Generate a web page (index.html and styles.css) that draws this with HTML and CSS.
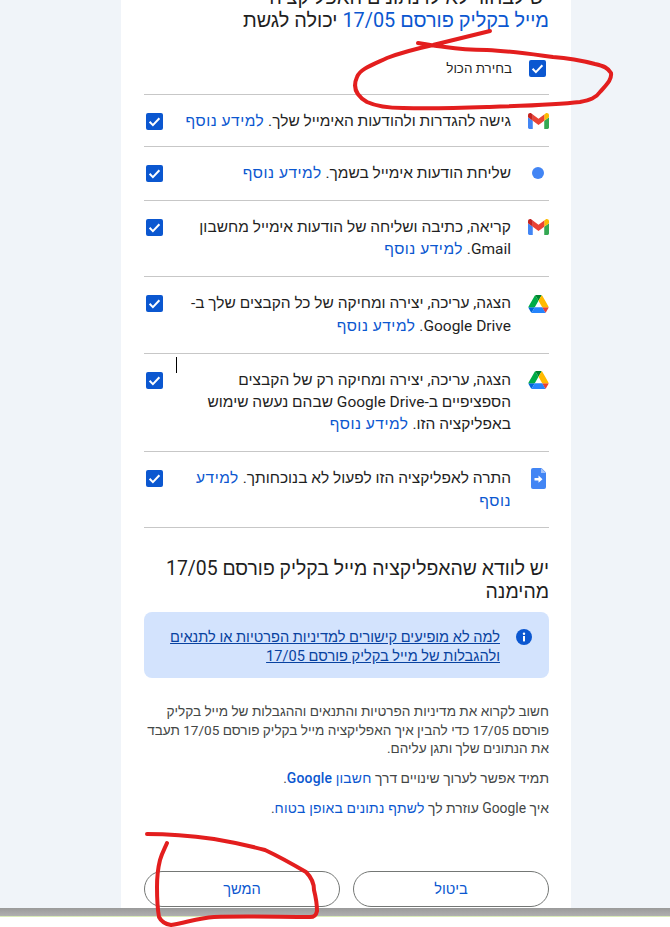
FILE: index.html
```html
<!DOCTYPE html>
<html lang="he" dir="rtl">
<head>
<meta charset="utf-8">
<title>בחירת הרשאות</title>
<link rel="stylesheet" href="styles.css">
</head>
<body>
<div class="screen">
  <main class="viewport">
    <div class="card">
      <h1 class="title">יש לבחור לאילו נתונים האפליקציה<br><a class="app-link">מייל בקליק פורסם 17/05</a> יכולה לגשת</h1>

      <label class="select-all">
        <span class="box"><svg viewBox="0 0 17 17"><path d="M3.6 8.8l3.3 3.3 6.5-6.9" class="tick"/></svg></span>
        <span class="select-label">בחירת הכול</span>
      </label>

      <ul class="scopes">
        <li class="scope">
          <span class="scope-icon"><svg class="ic-gmail" viewBox="52 42 88 66"><path fill="#4285f4" d="M58 108h14V74L52 59v43c0 3.32 2.69 6 6 6"/><path fill="#34a853" d="M120 108h14c3.32 0 6-2.69 6-6V59l-20 15"/><path fill="#fbbc04" d="M120 48v26l20-15v-8c0-7.42-8.47-11.65-14.4-7.2"/><path fill="#ea4335" d="M72 74V48l24 18 24-18v26L96 92"/><path fill="#c5221f" d="M52 51v8l20 15V48l-5.6-4.2c-5.94-4.45-14.4-.22-14.4 7.2"/></svg></span>
          <p class="scope-text">גישה להגדרות ולהודעות האימייל שלך. <a class="more">למידע נוסף</a></p>
          <span class="box"><svg viewBox="0 0 17 17"><path d="M3.6 8.8l3.3 3.3 6.5-6.9" class="tick"/></svg></span>
        </li>
        <li class="scope">
          <span class="scope-icon"><span class="dot"></span></span>
          <p class="scope-text">שליחת הודעות אימייל בשמך. <a class="more">למידע נוסף</a></p>
          <span class="box"><svg viewBox="0 0 17 17"><path d="M3.6 8.8l3.3 3.3 6.5-6.9" class="tick"/></svg></span>
        </li>
        <li class="scope">
          <span class="scope-icon"><svg class="ic-gmail" viewBox="52 42 88 66"><path fill="#4285f4" d="M58 108h14V74L52 59v43c0 3.32 2.69 6 6 6"/><path fill="#34a853" d="M120 108h14c3.32 0 6-2.69 6-6V59l-20 15"/><path fill="#fbbc04" d="M120 48v26l20-15v-8c0-7.42-8.47-11.65-14.4-7.2"/><path fill="#ea4335" d="M72 74V48l24 18 24-18v26L96 92"/><path fill="#c5221f" d="M52 51v8l20 15V48l-5.6-4.2c-5.94-4.45-14.4-.22-14.4 7.2"/></svg></span>
          <p class="scope-text">קריאה, כתיבה ושליחה של הודעות אימייל מחשבון Gmail. <a class="more">למידע נוסף</a></p>
          <span class="box"><svg viewBox="0 0 17 17"><path d="M3.6 8.8l3.3 3.3 6.5-6.9" class="tick"/></svg></span>
        </li>
        <li class="scope">
          <span class="scope-icon"><svg class="ic-drive" viewBox="0 0 87.3 78"><path d="m6.6 66.85 3.85 6.65c.8 1.4 1.95 2.5 3.3 3.3l13.75-23.8h-27.5c0 1.55.4 3.1 1.2 4.5z" fill="#0066da"/><path d="m43.65 25-13.75-23.8c-1.35.8-2.5 1.9-3.3 3.3l-25.4 44a9.06 9.06 0 0 0 -1.2 4.5h27.5z" fill="#00ac47"/><path d="m73.55 76.8c1.35-.8 2.5-1.9 3.3-3.3l1.6-2.75 7.65-13.25c.8-1.4 1.2-2.95 1.2-4.5h-27.502l5.852 11.5z" fill="#ea4335"/><path d="m43.65 25 13.75-23.8c-1.35-.8-2.9-1.2-4.5-1.2h-18.5c-1.6 0-3.15.45-4.5 1.2z" fill="#00832d"/><path d="m59.8 53h-32.3l-13.75 23.8c1.35.8 2.9 1.2 4.5 1.2h50.8c1.6 0 3.15-.45 4.5-1.2z" fill="#2684fc"/><path d="m73.4 26.5-12.7-22c-.8-1.4-1.95-2.5-3.3-3.3l-13.75 23.8 16.15 28h27.45c0-1.55-.4-3.1-1.2-4.5z" fill="#ffba00"/></svg></span>
          <p class="scope-text">הצגה, עריכה, יצירה ומחיקה של כל הקבצים שלך ב-Google Drive. <a class="more">למידע נוסף</a></p>
          <span class="box"><svg viewBox="0 0 17 17"><path d="M3.6 8.8l3.3 3.3 6.5-6.9" class="tick"/></svg></span>
        </li>
        <li class="scope">
          <span class="scope-icon"><svg class="ic-drive" viewBox="0 0 87.3 78"><path d="m6.6 66.85 3.85 6.65c.8 1.4 1.95 2.5 3.3 3.3l13.75-23.8h-27.5c0 1.55.4 3.1 1.2 4.5z" fill="#0066da"/><path d="m43.65 25-13.75-23.8c-1.35.8-2.5 1.9-3.3 3.3l-25.4 44a9.06 9.06 0 0 0 -1.2 4.5h27.5z" fill="#00ac47"/><path d="m73.55 76.8c1.35-.8 2.5-1.9 3.3-3.3l1.6-2.75 7.65-13.25c.8-1.4 1.2-2.95 1.2-4.5h-27.502l5.852 11.5z" fill="#ea4335"/><path d="m43.65 25 13.75-23.8c-1.35-.8-2.9-1.2-4.5-1.2h-18.5c-1.6 0-3.15.45-4.5 1.2z" fill="#00832d"/><path d="m59.8 53h-32.3l-13.75 23.8c1.35.8 2.9 1.2 4.5 1.2h50.8c1.6 0 3.15-.45 4.5-1.2z" fill="#2684fc"/><path d="m73.4 26.5-12.7-22c-.8-1.4-1.95-2.5-3.3-3.3l-13.75 23.8 16.15 28h27.45c0-1.55-.4-3.1-1.2-4.5z" fill="#ffba00"/></svg></span>
          <p class="scope-text">הצגה, עריכה, יצירה ומחיקה רק של הקבצים הספציפיים ב-Google Drive שבהם נעשה שימוש באפליקציה הזו. <a class="more">למידע נוסף</a></p>
          <span class="box"><svg viewBox="0 0 17 17"><path d="M3.6 8.8l3.3 3.3 6.5-6.9" class="tick"/></svg></span>
        </li>
        <li class="scope">
          <span class="scope-icon"><svg class="ic-doc" viewBox="0 0 15 21"><path fill="#4285f4" d="M2 0h8.5L15 4.5V19a2 2 0 0 1-2 2H2a2 2 0 0 1-2-2V2a2 2 0 0 1 2-2z"/><path fill="#a1c2fa" d="M10 0l5 5h-5z"/><path fill="#fff" d="M3.5 10h4V7.6l4 3.6-4 3.6v-2.4h-4z"/></svg></span>
          <p class="scope-text">התרה לאפליקציה הזו לפעול לא בנוכחותך. <a class="more">למידע נוסף</a></p>
          <span class="box"><svg viewBox="0 0 17 17"><path d="M3.6 8.8l3.3 3.3 6.5-6.9" class="tick"/></svg></span>
        </li>
      </ul>

      <h2 class="subtitle">יש לוודא שהאפליקציה מייל בקליק פורסם 17/05 מהימנה</h2>

      <div class="notice">
        <svg class="info" viewBox="0 0 16 16"><circle cx="8" cy="8" r="8" fill="#0b57d0"/><rect x="7" y="7" width="2" height="5.4" fill="#fff"/><circle cx="8" cy="4.8" r="1.2" fill="#fff"/></svg>
        <a class="notice-link">למה לא מופיעים קישורים למדיניות הפרטיות או לתנאים ולהגבלות של מייל בקליק פורסם 17/05</a>
      </div>

      <p class="note note-lead">חשוב לקרוא את מדיניות הפרטיות והתנאים וההגבלות של מייל בקליק פורסם 17/05 כדי להבין איך האפליקציה מייל בקליק פורסם 17/05 תעבד את הנתונים שלך ותגן עליהם.</p>
      <p class="note">תמיד אפשר לערוך שינויים דרך <a class="strong-link">חשבון Google</a>.</p>
      <p class="note">איך Google עוזרת לך <a class="strong-link">לשתף נתונים באופן בטוח</a>.</p>

      <div class="actions">
        <button class="btn" type="button">ביטול</button>
        <button class="btn" type="button">המשך</button>
      </div>
    </div>
  </main>
  <div class="taskbar"></div>
  <div class="below"></div>

  <span class="text-caret"></span>
  <svg class="scribble" viewBox="0 0 670 927">
    <path d="M490 31C470 36 450 41 433 45C415 49 400 53 387 58C372 65 360 69 357 77C353 86 355 95 367 102C378 107 392 108 403 108C430 109 460 108 487 107C520 106 555 105 580 102C590 100 596 98 600 92C606 85 612 80 611 73C608 68 604 66 595 64C580 60 568 58 553 57C530 54 510 51 487 50C470 50 458 49 445 47C435 46 425 44 418 43"/>
    <path d="M147 834C170 834 192 836 214 839C232 842 250 846 265 850C280 857 294 865 306 872C312 878 314 884 314 890C316 898 317 905 317 911C316 916 314 917 310 917C280 917 245 916 214 917C198 918 185 923 171 925C165 924 161 921 159 917C157 906 157 896 157 887C157 876 158 868 160 860C162 853 165 848 167 843"/>
  </svg>
</div>
</body>
</html>
```
FILE: styles.css
```css
* {
  box-sizing: border-box;
}

html,
body {
  margin: 0;
  padding: 0;
  background: #fff;
}

body {
  font-family: Roboto, "Liberation Sans", Arial, sans-serif;
  color: #1f1f1f;
}

.screen {
  position: relative;
  width: 670px;
  height: 927px;
  overflow: hidden;
}

.viewport {
  display: flex;
  justify-content: flex-start;
  height: 908px;
  overflow: hidden;
  padding-right: 99px;
  background: #f0f4f9;
}

.card {
  width: 450px;
  padding: 0 22px 0 23px;
  background: #fff;
}

.title {
  margin: -14px 0 0;
  font-size: 19.9px;
  font-weight: 400;
  line-height: 23px;
}

.app-link {
  color: #0b57d0;
}

.select-all {
  display: flex;
  align-items: center;
  gap: 17px;
  padding: 28px 3px 17px 0;
  border-bottom: 1px solid #c7c7c7;
}

.select-label {
  font-size: 13.4px;
  line-height: 17px;
}

.box {
  display: block;
  flex: none;
  width: 17px;
  height: 17px;
  border-radius: 2px;
  background: #0b57d0;
}

.box svg {
  display: block;
  width: 17px;
  height: 17px;
}

.tick {
  fill: none;
  stroke: #fff;
  stroke-width: 2;
}

.scopes {
  margin: 0;
  padding: 0;
  list-style: none;
}

.scope {
  display: flex;
  align-items: flex-start;
  gap: 16px;
  padding: 15px 0 15.5px;
  border-bottom: 1px solid #c7c7c7;
}

.scope:first-child {
  padding-bottom: 13.6px;
}

.scope:last-child {
  padding-bottom: 14.5px;
}

.scope-icon {
  display: flex;
  flex: none;
  align-items: center;
  justify-content: center;
  width: 22px;
  height: 22px;
}

.ic-gmail {
  display: block;
  width: 21px;
  height: 16px;
}

.ic-drive {
  display: block;
  width: 21px;
  height: 18px;
  margin-top: 1px;
}

.ic-doc {
  display: block;
  width: 15px;
  height: 21px;
}

.dot {
  display: block;
  width: 12px;
  height: 12px;
  border-radius: 50%;
  background: #4285f4;
}

.scope-text {
  flex: 1;
  margin: 0;
  font-size: 15.5px;
  line-height: 22.4px;
}

.more {
  color: #0b57d0;
  letter-spacing: 0.5px;
}

.scope .box {
  margin: 3px 4px 0 2px;
}

.subtitle {
  margin: 29.5px 0 9px;
  font-size: 19.4px;
  font-weight: 400;
  line-height: 23px;
}

.notice {
  display: flex;
  align-items: flex-start;
  gap: 16px;
  height: 66px;
  padding: 16px 17px 0 20px;
  border-radius: 8px;
  background: #d3e3fd;
}

.info {
  flex: none;
  width: 16px;
  height: 16px;
  margin-top: 1px;
}

.notice-link {
  font-size: 14.6px;
  line-height: 19px;
  color: #0842a0;
  text-decoration: underline;
}

.note {
  margin: 0 0 11.5px;
  font-size: 13.9px;
  line-height: 18.5px;
  color: #444746;
}

.note-lead {
  font-size: 13.6px;
}

.notice + .note {
  margin-top: 24px;
}

.strong-link {
  color: #0b57d0;
  font-weight: 500;
  letter-spacing: 0.2px;
}

.actions {
  display: flex;
  gap: 13px;
  margin-top: 53px;
}

.btn {
  flex: 1;
  height: 36px;
  padding: 0;
  border: 1px solid #747775;
  border-radius: 18px;
  background: #fff;
  color: #0b57d0;
  font-family: inherit;
  font-size: 14.6px;
}

.taskbar {
  height: 8px;
  background: linear-gradient(#9a9a9a, #b0b0b0);
}

.below {
  height: 11px;
  border-top: 1px solid #d9ecb8;
  background: #fff;
}

.text-caret {
  position: absolute;
  top: 357px;
  left: 176px;
  width: 1px;
  height: 16px;
  background: #000;
}

.scribble {
  position: absolute;
  inset: 0;
  width: 670px;
  height: 927px;
  pointer-events: none;
  fill: none;
  stroke: #e31e1e;
  stroke-width: 4;
  stroke-linecap: round;
  stroke-linejoin: round;
}
```
